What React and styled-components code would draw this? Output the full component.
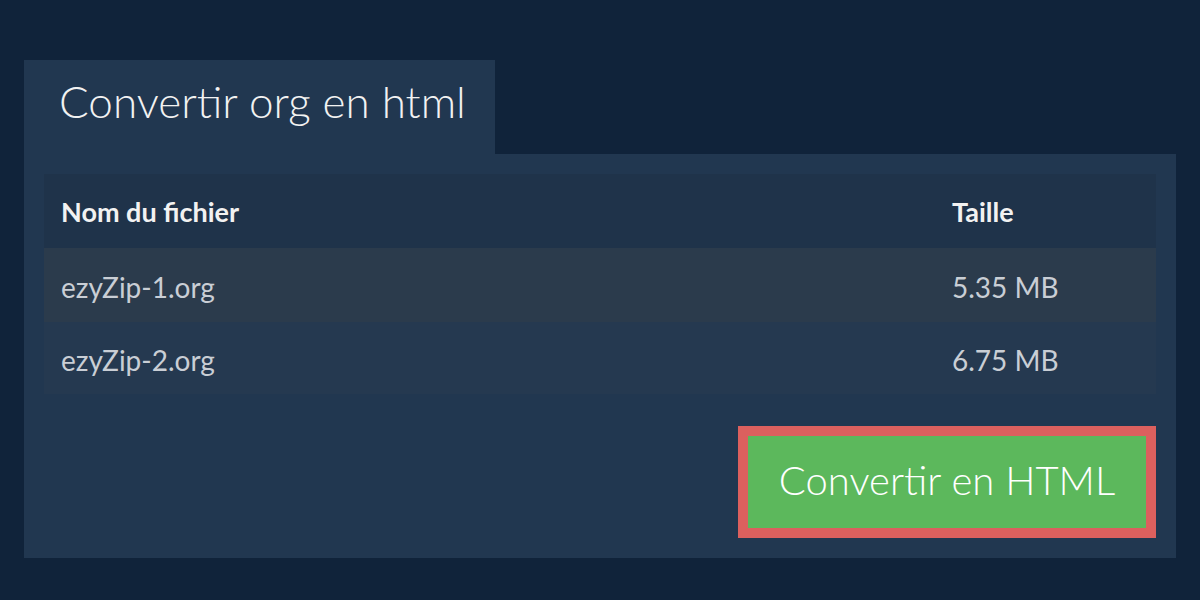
import React from "react";
import styled, { createGlobalStyle } from "styled-components";

const Global = createGlobalStyle`
  html, body { margin: 0; padding: 0; background: #10233a; }
  body { font-family: Lato, "Noto Sans", sans-serif; }
`;

const Page = styled.div`
  width: 1200px;
  height: 600px;
  box-sizing: border-box;
  padding: 60px 24px 0 24px;
  background: #10233a;
  display: flex;
  flex-direction: column;
  align-items: flex-start;
`;

const Tab = styled.h1`
  margin: 0;
  width: 471px;
  height: 94px;
  box-sizing: border-box;
  padding: 0 0 13px 35px;
  display: flex;
  align-items: center;
  background: #213750;
  color: #f2f2f2;
  font-weight: 300;
  font-size: 44px;
  line-height: 1;
`;

const Panel = styled.section`
  width: 1152px;
  box-sizing: border-box;
  background: #213750;
  padding: 20px;
  display: flex;
  flex-direction: column;
`;

const Table = styled.div`
  display: flex;
  flex-direction: column;
`;

const Row = styled.div`
  display: grid;
  grid-template-columns: 891px 1fr;
  height: ${(p) => p.$h || 74}px;
  align-items: center;
  background: ${(p) => p.$bg};
  padding: 0 17px;
  font-size: ${(p) => (p.$head ? 27 : 28)}px;
  font-weight: ${(p) => (p.$head ? 700 : 400)};
  color: ${(p) => (p.$head ? "#f2f2f2" : "#c9ced5")};
`;

const Cell = styled.div`
  padding-top: ${(p) => (p.$head ? 0 : 3)}px;
`;

const Actions = styled.div`
  display: flex;
  justify-content: flex-end;
  padding-top: 32px;
`;

const Button = styled.button`
  width: 418px;
  height: 112px;
  box-sizing: border-box;
  border: 10px solid #dc605e;
  background: #5cb85c;
  color: #ffffff;
  font-family: Lato, "Noto Sans", sans-serif;
  font-weight: 300;
  font-size: 40px;
  padding: 0 0 4px 0;
  cursor: pointer;
`;

const files = [
  { name: "ezyZip-1.org", size: "5.35 MB", bg: "#2b3b4c" },
  { name: "ezyZip-2.org", size: "6.75 MB", bg: "#253950", h: 72 },
];

export default function App() {
  return (
    <>
      <Global />
      <Page>
        <Tab>Convertir org en html</Tab>
        <Panel>
          <Table>
            <Row $head $bg="#1f334a">
              <Cell $head>Nom du fichier</Cell>
              <Cell $head>Taille</Cell>
            </Row>
            {files.map((f) => (
              <Row key={f.name} $bg={f.bg} $h={f.h}>
                <Cell>{f.name}</Cell>
                <Cell>{f.size}</Cell>
              </Row>
            ))}
          </Table>
          <Actions>
            <Button>Convertir en HTML</Button>
          </Actions>
        </Panel>
      </Page>
    </>
  );
}
